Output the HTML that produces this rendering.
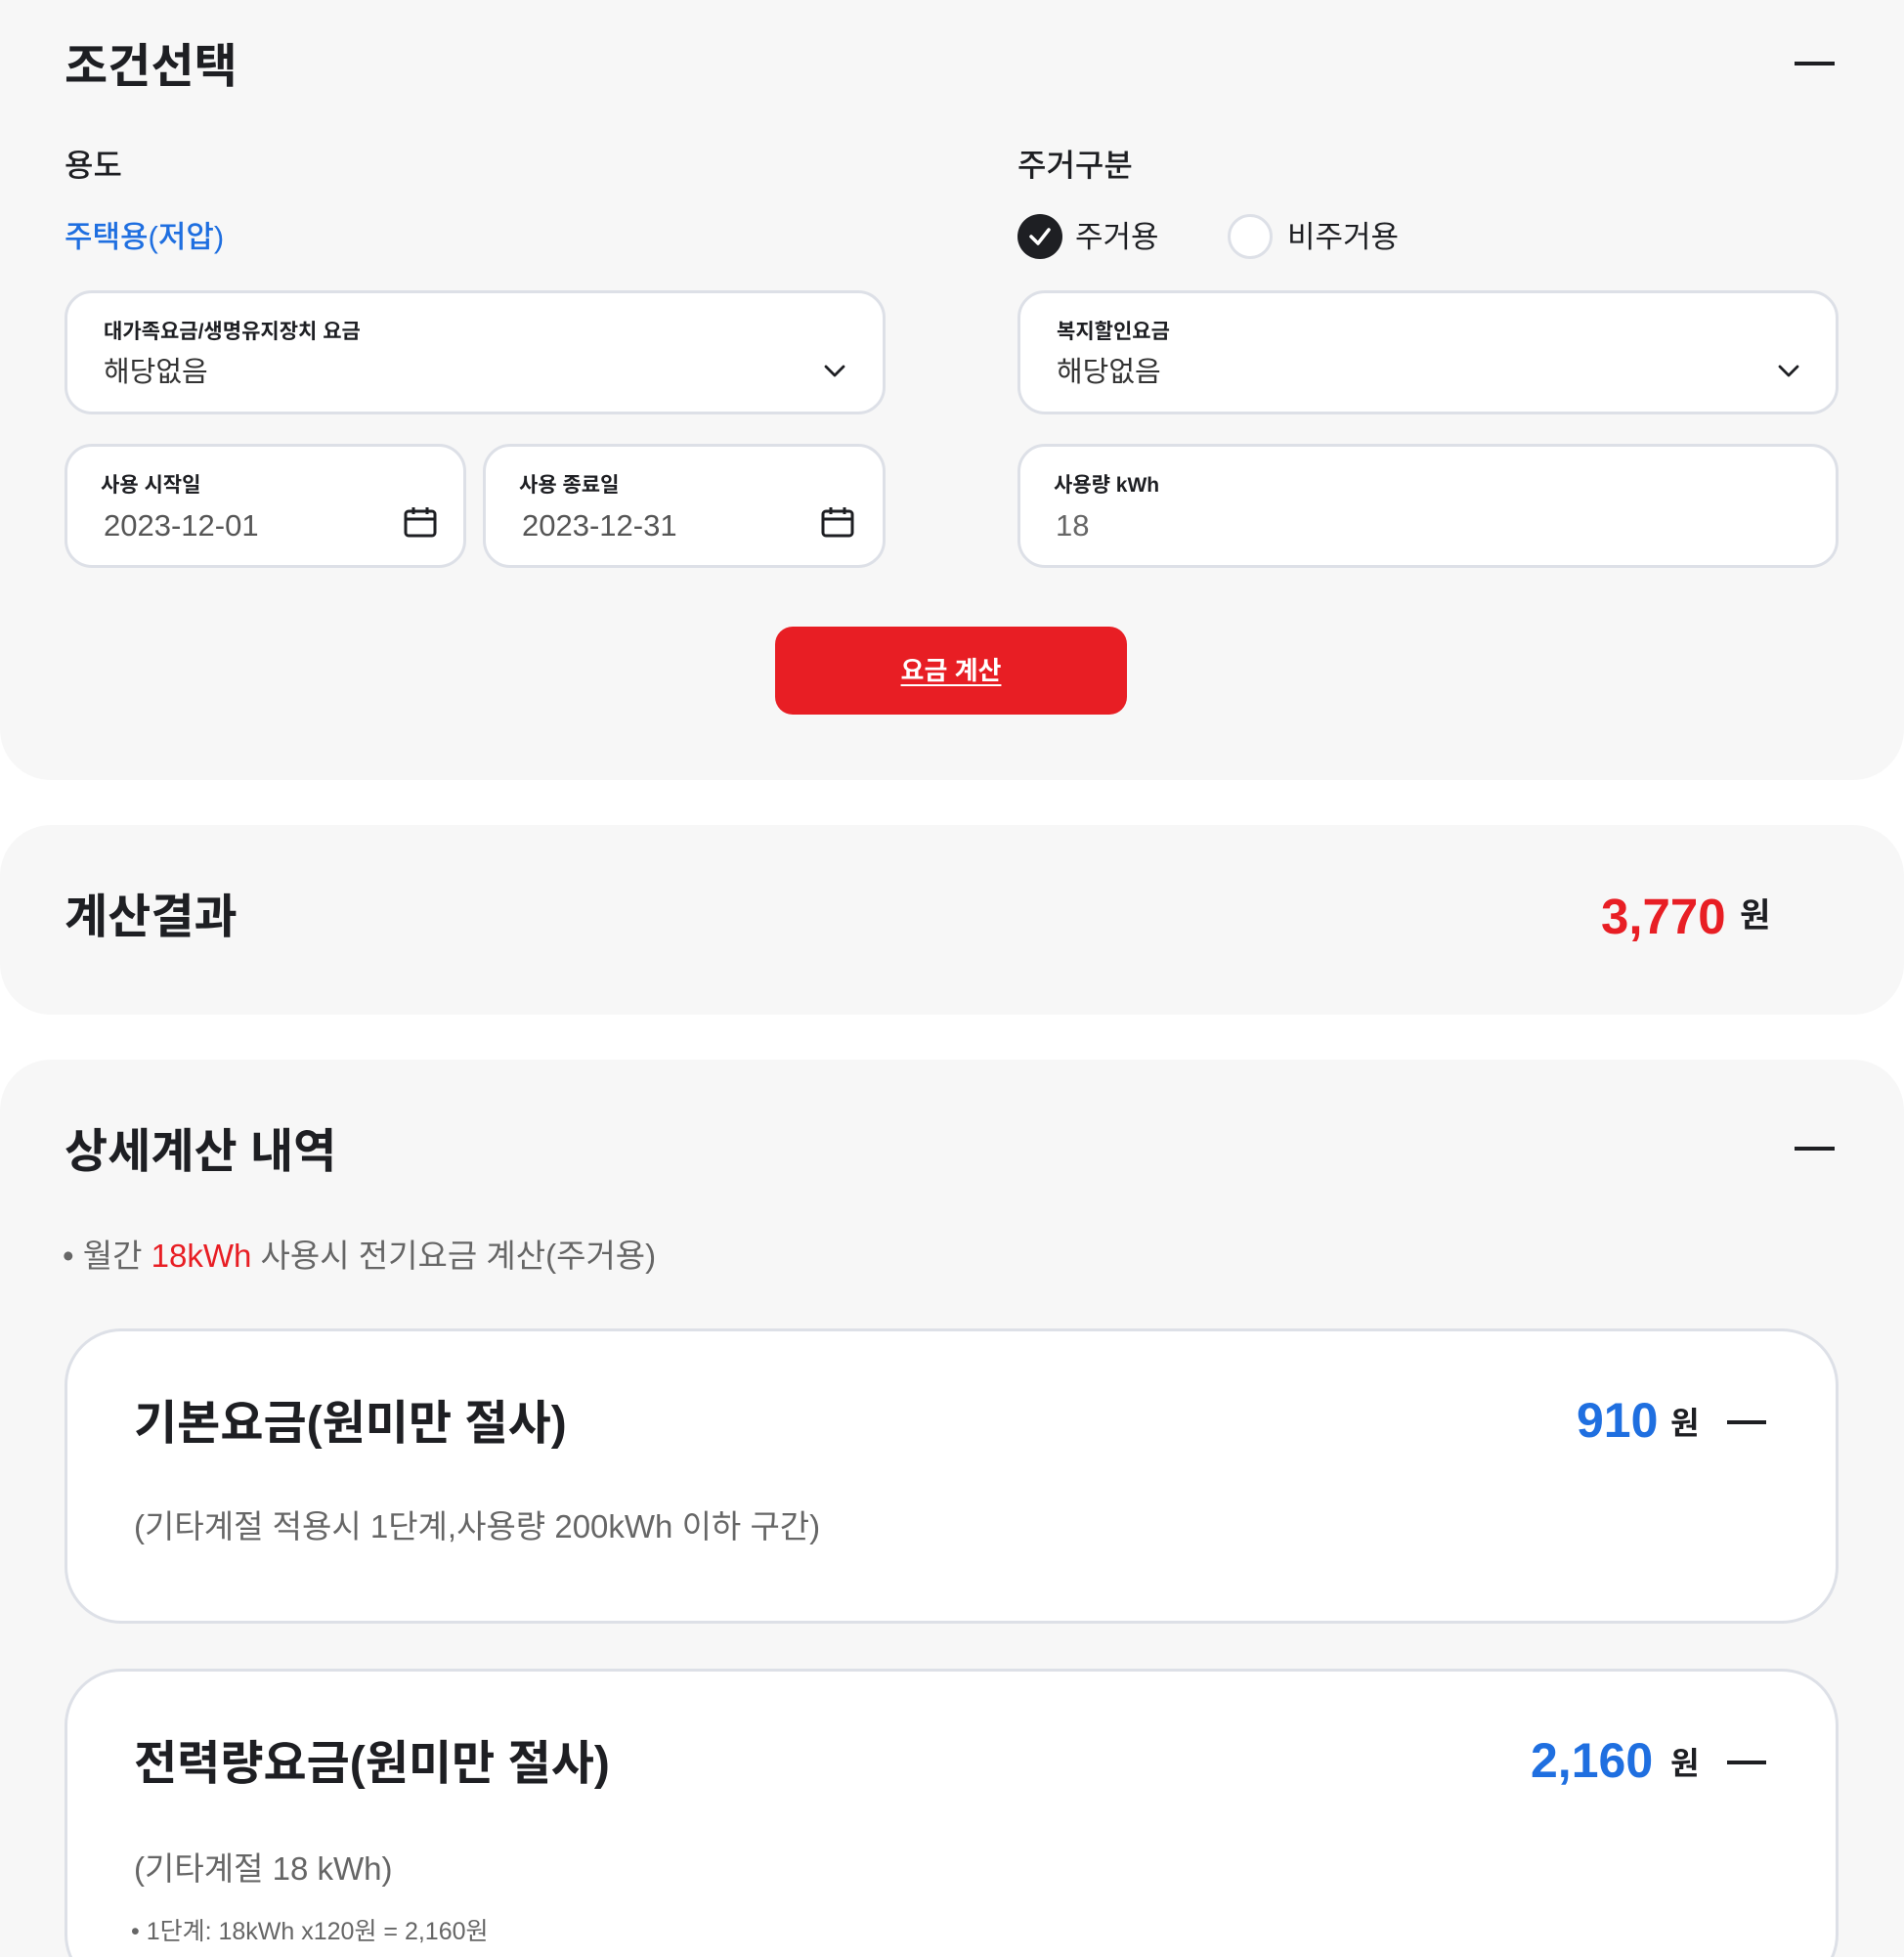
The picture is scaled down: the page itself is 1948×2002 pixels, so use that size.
<!DOCTYPE html>
<html style="width:1948px;height:2002px;overflow:hidden"><head><meta charset="utf-8"><style>
*{margin:0;padding:0;box-sizing:border-box}
body{width:1948px;height:2002px;background:#fff;position:relative;overflow:hidden;font-family:"Liberation Sans","Noto Sans CJK KR",sans-serif;color:#1e1f23}
.a{position:absolute;white-space:nowrap;line-height:1}
.panel{position:absolute;background:#f7f7f7;left:0;width:1948px}
.box{position:absolute;background:#fff;border:3px solid #dde0e7;border-radius:28px}
.lbl{font-size:21px;font-weight:700;color:#1e1f23}
.val{font-size:29px;color:#333}
.minus{position:absolute;height:4px;background:#1e1f23}
.cal{position:absolute;width:34px;height:32px}
</style></head><body>
<div class="panel" style="top:0;height:798px;border-radius:0 0 52px 52px"></div>
<div class="panel" style="top:844px;height:194px;border-radius:52px"></div>
<div class="panel" style="top:1084px;height:918px;border-radius:52px 52px 0 0"></div>

<div class="a" style="left:66px;top:45px;font-size:48px;font-weight:700">조건선택</div>
<div class="minus" style="left:1836px;top:63px;width:41px"></div>

<div class="a" style="left:66px;top:153px;font-size:32px;font-weight:500">용도</div>
<div class="a" style="left:66px;top:227px;font-size:31px;font-weight:500;color:#1f6fe0">주택용(저압)</div>
<div class="a" style="left:1041px;top:153px;font-size:32px;font-weight:500">주거구분</div>

<div class="a" style="left:1041px;top:219px;width:46px;height:46px;border-radius:50%;background:#1e1f23"></div>
<svg class="a" style="left:1041px;top:219px" width="46" height="46"><path d="M14 23 L21 30 L32 16" fill="none" stroke="#fff" stroke-width="3.5" stroke-linecap="round" stroke-linejoin="round"/></svg>
<div class="a" style="left:1100px;top:227px;font-size:31px">주거용</div>
<div class="a" style="left:1256px;top:219px;width:46px;height:46px;border-radius:50%;background:#fff;border:3px solid #dde0e7"></div>
<div class="a" style="left:1317px;top:227px;font-size:31px">비주거용</div>

<div class="box" style="left:66px;top:297px;width:840px;height:127px"></div>
<div class="a lbl" style="left:106px;top:329px">대가족요금/생명유지장치 요금</div>
<div class="a val" style="left:106px;top:367px">해당없음</div>
<svg class="a" style="left:842px;top:372px" width="24" height="16"><path d="M3 3 L12 12 L21 3" fill="none" stroke="#1e1f23" stroke-width="2.8" stroke-linecap="round" stroke-linejoin="round"/></svg>

<div class="box" style="left:1041px;top:297px;width:840px;height:127px"></div>
<div class="a lbl" style="left:1081px;top:329px">복지할인요금</div>
<div class="a val" style="left:1081px;top:367px">해당없음</div>
<svg class="a" style="left:1818px;top:372px" width="24" height="16"><path d="M3 3 L12 12 L21 3" fill="none" stroke="#1e1f23" stroke-width="2.8" stroke-linecap="round" stroke-linejoin="round"/></svg>

<div class="box" style="left:66px;top:454px;width:411px;height:127px"></div>
<div class="a lbl" style="left:103px;top:486px">사용 시작일</div>
<div class="a val" style="left:106px;top:522px;color:#555;font-size:31px">2023-12-01</div>
<svg class="cal" style="left:413px;top:518px" viewBox="0 0 34 32"><rect x="2" y="5" width="30" height="25" rx="3" fill="none" stroke="#1e1f23" stroke-width="3"/><path d="M2 13 H32 M10 1 V8 M24 1 V8" stroke="#1e1f23" stroke-width="3"/></svg>

<div class="box" style="left:494px;top:454px;width:412px;height:127px"></div>
<div class="a lbl" style="left:531px;top:486px">사용 종료일</div>
<div class="a val" style="left:534px;top:522px;color:#555;font-size:31px">2023-12-31</div>
<svg class="cal" style="left:840px;top:518px" viewBox="0 0 34 32"><rect x="2" y="5" width="30" height="25" rx="3" fill="none" stroke="#1e1f23" stroke-width="3"/><path d="M2 13 H32 M10 1 V8 M24 1 V8" stroke="#1e1f23" stroke-width="3"/></svg>

<div class="box" style="left:1041px;top:454px;width:840px;height:127px"></div>
<div class="a lbl" style="left:1078px;top:486px">사용량 kWh</div>
<div class="a val" style="left:1080px;top:522px;color:#666;font-size:31px">18</div>

<div class="a" style="left:793px;top:641px;width:360px;height:90px;background:#e81e24;border-radius:18px;color:#fff;font-size:26px;font-weight:700;text-align:center;line-height:90px;text-decoration:underline;text-underline-offset:5px">요금 계산</div>

<div class="a" style="left:66px;top:915px;font-size:48px;font-weight:700">계산결과</div>
<div class="a" style="left:1638px;top:912px;font-size:51px;font-weight:700;color:#e81e24">3,770</div>
<div class="a" style="left:1780px;top:920px;font-size:34px;font-weight:700">원</div>

<div class="a" style="left:66px;top:1155px;font-size:48px;font-weight:700">상세계산 내역</div>
<div class="minus" style="left:1836px;top:1173px;width:41px"></div>
<div class="a" style="left:64px;top:1268px;font-size:33px;color:#666">• 월간 <span style="color:#e81e24">18kWh</span> 사용시 전기요금 계산(주거용)</div>

<div class="box" style="left:66px;top:1359px;width:1815px;height:302px;border-radius:58px"></div>
<div class="a" style="left:137px;top:1433px;font-size:48px;font-weight:700">기본요금(원미만 절사)</div>
<div class="a" style="left:1613px;top:1428px;font-size:50px;font-weight:700;color:#1f6fe0">910</div>
<div class="a" style="left:1709px;top:1440px;font-size:32px;font-weight:700">원</div>
<div class="minus" style="left:1767px;top:1453px;width:40px"></div>
<div class="a" style="left:137px;top:1545px;font-size:33px;color:#666">(기타계절 적용시 1단계,사용량 200kWh 이하 구간)</div>

<div class="box" style="left:66px;top:1707px;width:1815px;height:330px;border-radius:58px"></div>
<div class="a" style="left:137px;top:1781px;font-size:48px;font-weight:700">전력량요금(원미만 절사)</div>
<div class="a" style="left:1566px;top:1776px;font-size:50px;font-weight:700;color:#1f6fe0">2,160</div>
<div class="a" style="left:1709px;top:1788px;font-size:32px;font-weight:700">원</div>
<div class="minus" style="left:1767px;top:1801px;width:40px"></div>
<div class="a" style="left:137px;top:1895px;font-size:33px;color:#666">(기타계절 18 kWh)</div>
<div class="a" style="left:134px;top:1964px;font-size:25px;color:#666">• 1단계: 18kWh x120원 = 2,160원</div>
</body></html>
